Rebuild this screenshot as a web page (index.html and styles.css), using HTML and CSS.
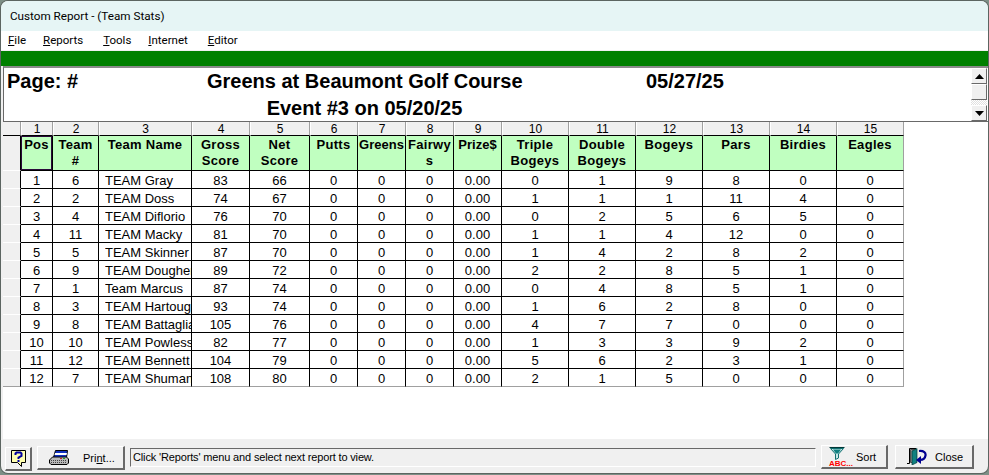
FILE: index.html
```html
<!DOCTYPE html>
<html lang="en">
	<head>
		<meta charset="UTF-8" />
		<title>Custom Report - (Team Stats)</title>
		<link rel="stylesheet" href="styles.css">
	</head>
	<body>
		<div class="window">
			<div class="titlebar">Custom Report - (Team Stats)</div>
			<div class="menubar">
				<span class="menu-file"><u>F</u>ile</span>
				<span class="menu-reports"><u>R</u>eports</span>
				<span class="menu-tools"><u>T</u>ools</span>
				<span class="menu-internet"><u>I</u>nternet</span>
				<span class="menu-editor"><u>E</u>ditor</span>
			</div>
			<div class="greenbar"></div>

			<div class="report-head">
				<div class="report-title">
					<span>Page: #</span>
					<span class="title-center">Greens at Beaumont Golf Course</span>
					<span class="title-date">05/27/25</span>
					<span></span>
					<span class="title-center">Event #3 on 05/20/25</span>
				</div>
				<div class="scrollbar">
					<div class="sb-btn"><svg width="9" height="5" viewBox="0 0 9 5"><path d="M4.5 0 9 5H0z" /></svg></div>
					<div class="sb-thumb"></div>
					<div class="sb-track"></div>
					<div class="sb-btn"><svg width="9" height="5" viewBox="0 0 9 5"><path d="M0 0h9L4.5 5z" /></svg></div>
				</div>
			</div>

			<div class="grid-area">
				<table class="stats">
					<colgroup>
						<col class="c-gutter" /><col class="c-pos" /><col class="c-team" /><col class="c-name" />
						<col class="c-gross" /><col class="c-net" /><col class="c-sm" /><col class="c-sm" />
						<col class="c-sm" /><col class="c-sm" /><col class="c-lg" /><col class="c-lg" />
						<col class="c-lg" /><col class="c-lg" /><col class="c-lg" /><col class="c-lg" />
					</colgroup>
					<thead>
						<tr class="numbers">
							<th></th><th>1</th><th>2</th><th>3</th><th>4</th><th>5</th><th>6</th><th>7</th>
							<th>8</th><th>9</th><th>10</th><th>11</th><th>12</th><th>13</th><th>14</th><th>15</th>
						</tr>
						<tr class="heads">
							<td class="gutter"></td>
							<th class="focus">Pos</th><th>Team<br />#</th><th>Team Name</th><th>Gross Score</th><th>Net Score</th>
							<th>Putts</th><th class="tight">Greens</th><th>Fairwys</th><th class="tight">Prize$</th><th>Triple Bogeys</th><th>Double Bogeys</th>
							<th>Bogeys</th><th>Pars</th><th>Birdies</th><th>Eagles</th>
						</tr>
					</thead>
					<tbody>
						<tr><td class="gutter"></td><td>1</td><td>6</td><td class="name"><div>TEAM Gray</div></td><td>83</td><td>66</td><td>0</td><td>0</td><td>0</td><td>0.00</td><td>0</td><td>1</td><td>9</td><td>8</td><td>0</td><td>0</td></tr>
						<tr><td class="gutter"></td><td>2</td><td>2</td><td class="name"><div>TEAM Doss</div></td><td>74</td><td>67</td><td>0</td><td>0</td><td>0</td><td>0.00</td><td>1</td><td>1</td><td>1</td><td>11</td><td>4</td><td>0</td></tr>
						<tr><td class="gutter"></td><td>3</td><td>4</td><td class="name"><div>TEAM Diflorio</div></td><td>76</td><td>70</td><td>0</td><td>0</td><td>0</td><td>0.00</td><td>0</td><td>2</td><td>5</td><td>6</td><td>5</td><td>0</td></tr>
						<tr><td class="gutter"></td><td>4</td><td>11</td><td class="name"><div>TEAM Macky</div></td><td>81</td><td>70</td><td>0</td><td>0</td><td>0</td><td>0.00</td><td>1</td><td>1</td><td>4</td><td>12</td><td>0</td><td>0</td></tr>
						<tr><td class="gutter"></td><td>5</td><td>5</td><td class="name"><div>TEAM Skinner</div></td><td>87</td><td>70</td><td>0</td><td>0</td><td>0</td><td>0.00</td><td>1</td><td>4</td><td>2</td><td>8</td><td>2</td><td>0</td></tr>
						<tr><td class="gutter"></td><td>6</td><td>9</td><td class="name"><div>TEAM Dougherty</div></td><td>89</td><td>72</td><td>0</td><td>0</td><td>0</td><td>0.00</td><td>2</td><td>2</td><td>8</td><td>5</td><td>1</td><td>0</td></tr>
						<tr><td class="gutter"></td><td>7</td><td>1</td><td class="name"><div>Team Marcus</div></td><td>87</td><td>74</td><td>0</td><td>0</td><td>0</td><td>0.00</td><td>0</td><td>4</td><td>8</td><td>5</td><td>1</td><td>0</td></tr>
						<tr><td class="gutter"></td><td>8</td><td>3</td><td class="name"><div>TEAM Hartough</div></td><td>93</td><td>74</td><td>0</td><td>0</td><td>0</td><td>0.00</td><td>1</td><td>6</td><td>2</td><td>8</td><td>0</td><td>0</td></tr>
						<tr><td class="gutter"></td><td>9</td><td>8</td><td class="name"><div>TEAM Battaglia</div></td><td>105</td><td>76</td><td>0</td><td>0</td><td>0</td><td>0.00</td><td>4</td><td>7</td><td>7</td><td>0</td><td>0</td><td>0</td></tr>
						<tr><td class="gutter"></td><td>10</td><td>10</td><td class="name"><div>TEAM Powless</div></td><td>82</td><td>77</td><td>0</td><td>0</td><td>0</td><td>0.00</td><td>1</td><td>3</td><td>3</td><td>9</td><td>2</td><td>0</td></tr>
						<tr><td class="gutter"></td><td>11</td><td>12</td><td class="name"><div>TEAM Bennett</div></td><td>104</td><td>79</td><td>0</td><td>0</td><td>0</td><td>0.00</td><td>5</td><td>6</td><td>2</td><td>3</td><td>1</td><td>0</td></tr>
						<tr><td class="gutter"></td><td>12</td><td>7</td><td class="name"><div>TEAM Shuman</div></td><td>108</td><td>80</td><td>0</td><td>0</td><td>0</td><td>0.00</td><td>2</td><td>1</td><td>5</td><td>0</td><td>0</td><td>0</td></tr>
					</tbody>
				</table>
			</div>

			<div class="toolbar">
				<button class="btn btn-help">
					<svg width="15" height="17" viewBox="0 0 15 17">
						<path d="M.5.500h14v12h-4v4l-4-4H.500z" fill="#ffffb0" stroke="#000" />
						<path d="M4.500 5V3.500L5.500 2.500h4l1 1V6L7.500 7.500V9" fill="none" stroke="#0000a0" stroke-width="2" />
						<path d="M6.500 10h2v2h-2z" fill="#0000a0" />
					</svg>
				</button>
				<button class="btn btn-print">
					<svg width="20" height="15" viewBox="0 0 20 15">
						<path d="M6.500.500h12l-1 7h-13z" fill="#1030c0" stroke="#000" />
						<path d="M6 3h12l-.5 2H5.500z" fill="#fff" />
						<path d="M.500 10l3-3h14l2 2v4l-1.500 1.500H2L.500 13z" fill="#b8b8b8" stroke="#000" />
						<path d="M2 10.500h16M2 12.500h16" stroke="#444" stroke-dasharray="1 1" />
						<path d="M11 8.500h2" stroke="#d02020" /><path d="M14 8.500h2" stroke="#20a020" />
					</svg>
					<span>Pri<u>n</u>t...</span>
				</button>
				<div class="status">Click 'Reports' menu and select next report to view.</div>
				<button class="btn btn-sort">
					<span class="sort-icon">
						<svg width="16" height="13" viewBox="0 0 16 13">
							<path d="M.5.500h15" stroke="#003838" fill="none" />
							<path d="M1.500 1.500l5 5.500v5.500l3-1.500V7l5-5.500z" fill="#c8e8e8" stroke="#107070" />
							<path d="M4 2.500h8L9 6.500H7z" fill="#108080" />
						</svg>
						<span class="sort-abc">ABC...</span>
					</span>
					<span>Sort</span>
				</button>
				<button class="btn btn-close">
					<svg width="20" height="17" viewBox="0 0 20 17">
						<path d="M0 15.500h2.500V.500H9" fill="none" stroke="#000" />
						<path d="M3.500 1.500h6v13h-6z" fill="#909090" stroke="#505050" />
						<path d="M5 3l5-2.500v14l-5 2.500z" fill="#108080" stroke="#003838" stroke-width=".7" />
						<path d="M12 3c5-.5 7 2 6.500 4.500-.5 3-3 4.500-5.500 4.500" fill="none" stroke="#000090" stroke-width="2.200" />
						<path d="M14 8v8l-5-4z" fill="#000090" />
					</svg>
					<span>Close</span>
				</button>
			</div>
		</div>
	</body>
</html>
```

FILE: styles.css
```css
body {
	margin: 0;
	height: 475px;
	overflow: hidden;
	background: #7d8f86;
	font-family: "Liberation Sans", Arial, sans-serif;
	color: #000;
}

.window {
	display: flex;
	flex-direction: column;
	width: 987px;
	height: 472px;
	margin: 1px 0 0 1px;
	background: #f0f0f0;
	border-radius: 7px;
	box-shadow: 0 0 0 1px rgba(60, 60, 60, 0.5);
	overflow: hidden;
}

.titlebar {
	height: 30px;
	padding-left: 9px;
	background: #e6f5f5;
	font-family: Roboto, sans-serif;
	font-size: 11.7px;
	line-height: 30px;
}

.menubar {
	display: flex;
	height: 19px;
	padding-left: 7px;
	background: #fff;
	font-family: Roboto, sans-serif;
	font-size: 11.5px;
	line-height: 18px;
}

.menu-reports { margin-left: 17px; }
.menu-tools { margin-left: 20px; }
.menu-internet { margin-left: 17px; }
.menu-editor { margin-left: 20px; }

.greenbar {
	height: 15px;
	margin-top: 1px;
	background: #008000;
}

.report-head {
	display: flex;
	justify-content: space-between;
	box-sizing: border-box;
	height: 56px;
	margin-left: 2px;
	background: #fff;
	border-top: 2px solid #8a8a8a;
	border-left: 1px solid #696969;
	border-bottom: 1px solid #696969;
}

.report-title {
	display: grid;
	grid-template-columns: 200px 315px auto;
	grid-auto-rows: 27px;
	padding-left: 3px;
	font-size: 20px;
	font-weight: bold;
	line-height: 27px;
}

.title-center {
	text-align: center;
	white-space: nowrap;
}

.title-date {
	margin-left: 124px;
}

.scrollbar {
	display: flex;
	flex-direction: column;
	width: 16px;
	margin-right: 1px;
}

.sb-btn,
.sb-thumb {
	display: flex;
	align-items: center;
	justify-content: center;
	box-sizing: border-box;
	height: 16px;
	background: #f0f0f0;
	border: 1px solid #fff;
	border-right-color: #696969;
	border-bottom-color: #696969;
}

.sb-track {
	flex: 1;
	background: repeating-conic-gradient(#fff 0 25%, #e0e0e0 0 50%) 0 0 / 2px 2px;
}

.grid-area {
	flex: 1;
	margin-left: 2px;
	background: #fff;
}

.stats {
	border-collapse: separate;
	border-spacing: 0;
	table-layout: fixed;
	width: 901px;
	font-size: 13px;
}

.c-gutter { width: 18px; }
.c-pos { width: 32px; }
.c-team { width: 46px; }
.c-name { width: 93px; }
.c-gross { width: 58px; }
.c-net { width: 60px; }
.c-sm { width: 48px; }
.c-lg { width: 67px; }

.stats th,
.stats td {
	box-sizing: border-box;
	padding: 0;
	text-align: center;
	border-right: 1px solid #000;
	border-bottom: 1px solid #000;
}

.numbers th {
	height: 14px;
	padding-top: 1px;
	font-size: 12px;
	font-weight: normal;
	line-height: 12px;
	background: #f0f0f0;
	border-left: 1px solid #fff;
	border-right: 1px solid #a0a0a0;
}

.numbers th:first-child {
	border-left: none;
}

.heads th {
	height: 35px;
	padding-top: 1px;
	font-size: 13px;
	line-height: 16px;
	letter-spacing: 0.3px;
	vertical-align: top;
	overflow-wrap: anywhere;
	background: #c0ffc0;
}

.heads th.tight {
	letter-spacing: 0;
}

.heads th.focus {
	box-shadow: inset 0 0 0 1px #2a0a3a;
}

.stats tbody td {
	height: 18px;
	padding-top: 2px;
	line-height: 15px;
}

.stats .gutter {
	background: #f0f0f0;
	border-bottom-color: #fff;
}

.stats .name {
	padding-left: 6px;
	text-align: left;
}

.name div {
	overflow: hidden;
	white-space: nowrap;
}

.stats tr > :last-child {
	border-right-color: #a0a0a0;
}

.stats tbody tr:last-child td {
	border-bottom-color: #a0a0a0;
}

.toolbar {
	display: flex;
	align-items: flex-start;
	height: 34px;
	padding-left: 4px;
	font-size: 11px;
}

.btn {
	display: flex;
	align-items: center;
	box-sizing: border-box;
	height: 24px;
	padding: 0;
	background: #f0f0f0;
	border: none;
	border-top: 1px solid #fff;
	border-left: 1px solid #fff;
	border-right: 2px solid #696969;
	border-bottom: 2px solid #696969;
	font-family: inherit;
	font-size: 11px;
	color: #000;
}

.btn-help {
	width: 27px;
	margin-top: 8px;
	justify-content: center;
}

.btn-print {
	width: 88px;
	margin: 7px 0 0 5px;
	padding-left: 11px;
	gap: 14px;
}

.status {
	box-sizing: border-box;
	width: 686px;
	height: 19px;
	margin: 9px 0 0 5px;
	padding-left: 2px;
	letter-spacing: -0.15px;
	line-height: 16px;
	background: #f0f0f0;
	border-top: 1px solid #696969;
	border-left: 1px solid #696969;
	border-right: 1px solid #fff;
	border-bottom: 1px solid #fff;
}

.btn-sort {
	width: 67px;
	margin: 6px 0 0 5px;
	padding-left: 7px;
	gap: 3px;
}

.sort-icon {
	display: flex;
	flex-direction: column;
	align-items: flex-start;
	line-height: 7px;
}

.sort-abc {
	font-size: 8px;
	font-weight: bold;
	color: #ff0000;
}

.btn-close {
	width: 79px;
	margin: 6px 0 0 7px;
	padding-left: 11px;
	gap: 8px;
}
```
